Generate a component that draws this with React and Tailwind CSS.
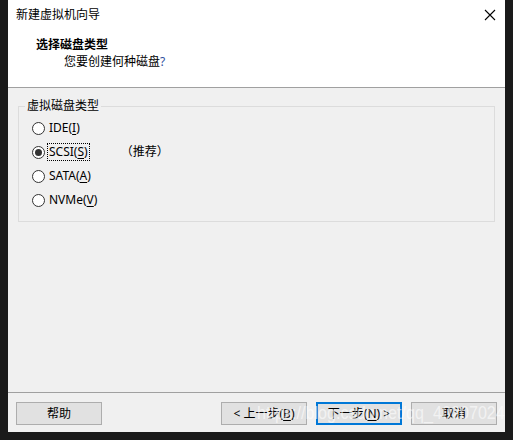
import React from 'react';

const font = { fontFamily: '"Noto Sans", "Noto Sans CJK SC", sans-serif' };

function Mn({ children }) {
    return <span className="underline underline-offset-2 decoration-1">{children}</span>;
}

function Radio({ checked, children, focused, extra }) {
    return (
        <div className="flex items-center h-[24px]">
            <span className="w-[13px] h-[13px] rounded-full border border-[#333] bg-white flex items-center justify-center">
                {checked && <span className="w-[7px] h-[7px] rounded-full bg-[#333]" />}
            </span>
            <span className={`ml-[3px] px-[1px] leading-[16px] text-[12px] text-[#000] ${focused ? 'outline outline-1 outline-dotted outline-[#000]' : ''}`}>
                {children}
            </span>
            {extra && <span className="ml-[32px] text-[12px]">{extra}</span>}
        </div>
    );
}

function Btn({ children, primary }) {
    return (
        <button
            className={`w-[86px] h-[23px] bg-[#e1e1e1] text-[12px] text-black flex items-center justify-center ${primary ? 'border-2 border-[#0078d7]' : 'border border-[#adadad]'}`}
        >
            {children}
        </button>
    );
}

export default function App() {
    return (
        <div className="w-[513px] h-[440px] bg-[#1a1a1a] relative overflow-hidden" style={font}>
            <div className="ml-[8px] w-[497px] h-[432px] bg-[#f0f0f0] flex flex-col">
                <div className="bg-white border-b border-[#a0a0a0] h-[88px] flex flex-col">
                    <div className="h-[30px] flex items-center justify-between pl-[8px] pr-[9px]">
                        <span className="text-[12px] text-black">新建虚拟机向导</span>
                        <svg width="12" height="12" viewBox="0 0 12 12">
                            <path d="M1 1 L11 11 M11 1 L1 11" stroke="#000" strokeWidth="1.1" />
                        </svg>
                    </div>
                    <div className="pl-[28px] mt-[7px] text-[12px] font-bold leading-[16px] text-black">选择磁盘类型</div>
                    <div className="pl-[56px] mt-[1px] text-[12px] leading-[16px] text-black">您要创建何种磁盘<span className="text-[#3050a0]">?</span></div>
                </div>

                <div className="mx-[10px] mt-[18px] w-[477px] h-[116px] border border-[#dcdcdc] relative flex flex-col pl-[13px] pt-[9px]">
                    <span className="absolute left-[6px] top-[-9px] bg-[#f0f0f0] px-[2px] text-[12px] leading-[16px] text-black">虚拟磁盘类型</span>
                    <Radio>IDE(<Mn>I</Mn>)</Radio>
                    <Radio checked focused extra="（推荐）">SCSI(<Mn>S</Mn>)</Radio>
                    <Radio>SATA(<Mn>A</Mn>)</Radio>
                    <Radio>NVMe(<Mn>V</Mn>)</Radio>
                </div>

                <div className="flex-1" />
                <div className="border-t border-[#a0a0a0] h-[40px] flex items-center px-[8px] pt-[2px]">
                    <Btn>帮助</Btn>
                    <div className="flex-1" />
                    <div className="flex gap-[9px]">
                        <Btn>&lt; 上一步(<Mn>B</Mn>)</Btn>
                        <Btn primary>下一步(<Mn>N</Mn>) &gt;</Btn>
                        <Btn>取消</Btn>
                    </div>
                </div>
            </div>
            <div
                className="absolute left-[257px] top-[403px] text-[19px] leading-[19px] text-white/60 whitespace-nowrap origin-left scale-x-[0.85] pointer-events-none"
                style={{ fontFamily: '"Liberation Sans", sans-serif' }}
            >
                https://blog.csdn.net/qq_40207024
            </div>
        </div>
    );
}
